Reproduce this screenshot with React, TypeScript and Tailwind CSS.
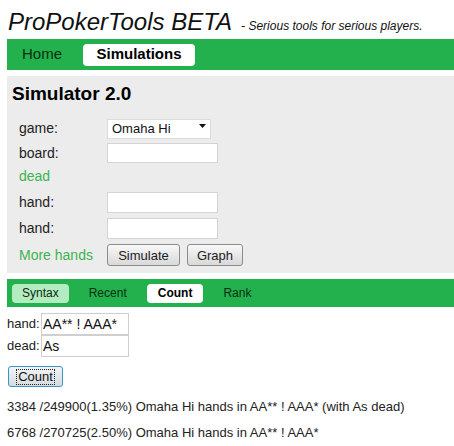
import { useState } from "react";

const green = "bg-[#22b14c]";

function FieldRow({
  label,
  h,
  green: isGreen,
  children,
}: {
  label: string;
  h: string;
  green?: boolean;
  children?: React.ReactNode;
}) {
  return (
    <div className={`flex items-center ${h}`}>
      <div
        className={`w-[88px] text-[14px] ${isGreen ? "text-[#3cb450]" : "text-[#222]"}`}
      >
        {label}
      </div>
      {children}
    </div>
  );
}

function GrayButton({ label, w }: { label: string; w: string }) {
  return (
    <button
      className={`${w} h-[22px] rounded-[3px] border border-[#8c8c8c] bg-linear-to-b from-[#f8f8f8] to-[#d9d9d9] text-[13px] text-[#222] leading-none`}
    >
      {label}
    </button>
  );
}

export default function App() {
  const [game, setGame] = useState("Omaha Hi");
  const tabs = ["Syntax", "Recent", "Count", "Rank"];

  return (
    <div className="w-[454px] h-[446px] overflow-hidden bg-white pl-[7px] font-['Liberation_Sans',Arial,sans-serif] text-[#111]">
      {/* header */}
      <div className="flex items-baseline pl-[1px] pt-[10px] h-[34px]">
        <span className="text-[24px] italic leading-[24px]">ProPokerTools BETA</span>
        <span className="ml-[9px] text-[12px] italic leading-[24px]">
          - Serious tools for serious players.
        </span>
      </div>

      {/* top nav */}
      <div className={`mt-[5px] h-[31px] ${green} flex items-center pl-[15px]`}>
        <span className="text-[15px] text-[#0a2e10]">Home</span>
        <span className="ml-[21px] flex h-[22px] w-[112px] items-center justify-center rounded-[4px] bg-white text-[15px] font-bold text-black">
          Simulations
        </span>
      </div>

      {/* simulator panel */}
      <div className="mt-[6px] h-[197px] bg-[#ececec] pl-[5px] pt-[7px]">
        <h1 className="h-[22px] text-[19px] font-bold leading-[22px] text-black">
          Simulator 2.0
        </h1>
        <div className="mt-[9px] pl-[7px]">
          <FieldRow label="game:" h="h-[28px]">
            <div className="relative">
              <select
                value={game}
                onChange={(e) => setGame(e.target.value)}
                className="h-[20px] w-[104px] appearance-none border border-[#dcdcdc] bg-white pl-[4px] text-[13px] leading-[18px] text-[#111] outline-none"
              >
                <option>Omaha Hi</option>
                <option>Omaha Hi/Lo</option>
                <option>Holdem</option>
              </select>
              <svg
                className="pointer-events-none absolute right-[5px] top-[8px]"
                width="7"
                height="4"
                viewBox="0 0 7 4"
              >
                <path d="M0 0h7L3.5 4z" fill="#111" />
              </svg>
            </div>
          </FieldRow>
          <FieldRow label="board:" h="h-[22px]">
            <input className="h-[20px] w-[111px] border border-[#d4d4d4] bg-white" />
          </FieldRow>
          <FieldRow label="dead" h="h-[25px]" green />
          <FieldRow label="hand:" h="h-[26px]">
            <input className="h-[21px] w-[111px] border border-[#d4d4d4] bg-white" />
          </FieldRow>
          <FieldRow label="hand:" h="h-[26px]">
            <input className="h-[21px] w-[111px] border border-[#d4d4d4] bg-white" />
          </FieldRow>
          <FieldRow label="More hands" h="h-[28px]" green>
            <div className="flex gap-[7px]">
              <GrayButton label="Simulate" w="w-[73px]" />
              <GrayButton label="Graph" w="w-[56px]" />
            </div>
          </FieldRow>
        </div>
      </div>

      {/* sub nav */}
      <div className={`mt-[6px] h-[28px] ${green} flex items-center gap-[10px] pl-[5px]`}>
        {tabs.map((t) => (
          <span
            key={t}
            className={`flex h-[19px] items-center rounded-[4px] px-[10px] text-[12px] ${
              t === "Syntax"
                ? "bg-[#b3ecc0] text-[#102a14]"
                : t === "Count"
                  ? "bg-white px-[11px] font-bold text-black"
                  : "text-[#0a2e10]"
            }`}
          >
            {t}
          </span>
        ))}
      </div>

      {/* count form */}
      <div className="mt-[6px]">
        <div className="flex items-center">
          <span className="w-[34px] text-[13px] text-[#222]">hand:</span>
          <input
            defaultValue="AA** ! AAA*"
            className="h-[22px] w-[88px] border border-[#cfcfcf] bg-white px-[1px] text-[14px] text-[#111]"
          />
        </div>
        <div className="flex items-center">
          <span className="w-[34px] text-[13px] text-[#222]">dead:</span>
          <input
            defaultValue="As"
            className="h-[22px] w-[88px] border border-[#cfcfcf] bg-white px-[1px] text-[14px] text-[#111]"
          />
        </div>
        <button className="ml-[1px] mt-[9px] flex h-[21px] w-[55px] items-center justify-center rounded-[3px] border border-[#3c93c6] bg-linear-to-b from-[#f2f5f7] to-[#d5dbe0]">
          <span className="border border-dotted border-[#222] px-[1px] text-[13px] leading-[14px] text-[#111]">
            Count
          </span>
        </button>
      </div>

      {/* results */}
      <div className="mt-[7px] text-[13px] leading-[26px] text-[#222]">
        <div>3384 /249900(1.35%) Omaha Hi hands in AA** ! AAA* (with As dead)</div>
        <div>6768 /270725(2.50%) Omaha Hi hands in AA** ! AAA*</div>
      </div>
    </div>
  );
}
